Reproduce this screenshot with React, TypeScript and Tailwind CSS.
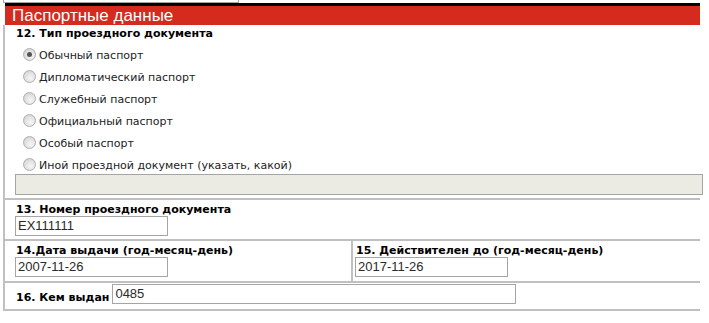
const options = [
  'Обычный паспорт',
  'Дипломатический паспорт',
  'Служебный паспорт',
  'Официальный паспорт',
  'Особый паспорт',
  'Иной проездной документ (указать, какой)',
];

function Radio({ checked }: { checked?: boolean }) {
  return (
    <span className="relative -top-[2px] mr-[3px] flex h-[13px] w-[13px] shrink-0 items-center justify-center rounded-full border border-[#b0b0b0] bg-[radial-gradient(circle_at_60%_65%,#f6f6f6_0%,#dedede_60%,#c6c6c6_100%)]">
      {checked && <span className="h-[5px] w-[5px] rounded-full bg-[#555]" />}
    </span>
  );
}

function Field({ value, w }: { value: string; w: string }) {
  return (
    <div className={`flex h-[20px] items-center border border-[#a5a5a5] bg-white pl-[2px] font-['Liberation_Sans',Arial,sans-serif] text-[13px] text-[#2a2a2a] ${w}`}>
      {value}
    </div>
  );
}

export default function App() {
  return (
    <div className="h-[323px] w-[709px] overflow-hidden bg-white font-['DejaVu_Sans',Verdana,sans-serif] text-[11px] text-black">
      <div className="ml-[3px] h-[3px] w-[236px] border-x border-b border-[#a5a5a5]" />
      <div className="ml-[5px] w-[695px] border-t-[3px] border-black bg-[#d52a1e] pl-[7px] font-['Liberation_Sans',Arial,sans-serif] text-[17px] leading-[19px] text-white">
        Паспортные данные
      </div>

      <div className="ml-[3px] w-[697px] border-l-2 border-[#c0c0c0]">
        {/* 12 */}
        <div className="border-b-2 border-[#c0c0c0] pb-[3px] pt-[2px]">
          <div className="pl-[11px] font-bold leading-[13px]">12. Тип проездного документа</div>
          <div className="mt-[5px] pl-[18px]">
            {options.map((o, i) => (
              <div key={o} className="flex h-[22px] items-center text-[#222]">
                <Radio checked={i === 0} />
                {o}
              </div>
            ))}
          </div>
          <div className="-mt-[3px] ml-[10px] h-[21px] w-[688px] border border-[#a5a5a5] bg-[#ebebe4]" />
        </div>

        {/* 13 */}
        <div className="h-[41px] border-b-2 border-[#c0c0c0] pl-[10px] pt-[3px]">
          <div className="pl-px font-bold leading-[13px]">13. Номер проездного документа</div>
          <Field value="EX111111" w="w-[153px]" />
        </div>

        {/* 14 / 15 */}
        <div className="flex h-[42px] border-b-2 border-[#c0c0c0]">
          <div className="w-[348px] border-r-2 border-[#c0c0c0] pl-[10px] pt-[3px]">
            <div className="pl-px font-bold leading-[13px]">14.Дата выдачи (год-месяц-день)</div>
            <Field value="2007-11-26" w="w-[153px]" />
          </div>
          <div className="pl-[2px] pt-[3px]">
            <div className="pl-px font-bold leading-[13px]">15. Действителен до (год-месяц-день)</div>
            <Field value="2017-11-26" w="w-[153px]" />
          </div>
        </div>

        {/* 16 */}
        <div className="flex h-[28px] items-start border-b-2 border-[#c0c0c0] pl-[11px] pt-px">
          <span className="mt-[7px] font-bold leading-[13px]">16. Кем выдан</span>
          <Field value="0485" w="ml-[3px] w-[404px]" />
        </div>
      </div>
    </div>
  );
}
